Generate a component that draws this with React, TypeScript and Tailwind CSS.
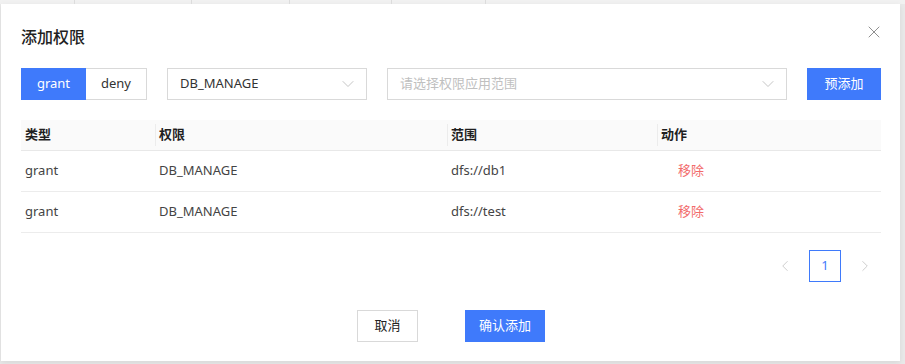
import { X, ChevronDown, ChevronLeft, ChevronRight } from 'lucide-react';

const rows = [
  { type: 'grant', perm: 'DB_MANAGE', scope: 'dfs://db1' },
  { type: 'grant', perm: 'DB_MANAGE', scope: 'dfs://test' },
];

const font = "font-['Noto_Sans','Noto_Sans_CJK_SC',sans-serif]";

export default function App() {
  return (
    <div className={`w-[905px] h-[364px] bg-[#e9e9e9] overflow-hidden ${font}`}>
      {/* page tabs peeking out behind the modal */}
      <div className="flex h-[4px] bg-[#f1f1f1]">
        <div className="w-[75px] border-r border-[#dcdcdc]" />
        <div className="w-[115px] ml-[2px] border-r border-[#dcdcdc]" />
        <div className="w-[96px] ml-[2px] border-r border-[#dcdcdc]" />
        <div className="w-[100px] ml-[2px] border-r border-[#dcdcdc]" />
        <div className="w-[92px] ml-[2px] border-r border-[#dcdcdc]" />
      </div>

      {/* Modal */}
      <div className="ml-[1px] w-[899px] h-[357px] bg-white shadow-[0_2px_6px_rgba(0,0,0,0.08)] pl-[20px] pr-[19px] pt-[23px]">
        {/* Header */}
        <div className="flex items-start justify-between h-[20px]">
          <h2 className="text-[16px] leading-[20px] font-medium text-[#222]">添加权限</h2>
          <X className="w-[20px] h-[20px] text-[#8f8f8f] mt-[-5px] mr-[-3px]" strokeWidth={1.2} />
        </div>

        {/* Controls */}
        <div className="flex items-center mt-[21px] h-[32px]">
          <div className="flex h-[32px] text-[13px]">
            <button className="w-[65px] bg-[#3f7afb] text-white">grant</button>
            <button className="w-[61px] border border-[#d9d9d9] border-l-0 text-[#333]">deny</button>
          </div>
          <div className="ml-[20px] w-[200px] h-[32px] border border-[#d9d9d9] flex items-center justify-between pl-[12px] pr-[8px]">
            <span className="text-[13px] text-[#333]">DB_MANAGE</span>
            <ChevronDown className="w-[20px] h-[20px] text-[#c0c0c0]" strokeWidth={1.1} />
          </div>
          <div className="ml-[20px] w-[400px] h-[32px] border border-[#d9d9d9] flex items-center justify-between pl-[12px] pr-[8px]">
            <span className="text-[13px] text-[#c0c0c0]">请选择权限应用范围</span>
            <ChevronDown className="w-[20px] h-[20px] text-[#c0c0c0]" strokeWidth={1.1} />
          </div>
          <button className="ml-[20px] w-[74px] h-[32px] bg-[#3f7afb] text-white text-[13px]">预添加</button>
        </div>

        {/* Table */}
        <div className="mt-[20px] w-[860px] text-[13px]">
          <div className="grid grid-cols-[134px_292px_210px_224px] h-[31px] bg-[#fafafa] border-b border-[#e8e8e8] items-center font-semibold text-[#1f1f1f]">
            <div className="pl-[4px]">类型</div>
            <div className="pl-[3px] border-l border-[#ececec] h-[22px] flex items-center">权限</div>
            <div className="pl-[3px] border-l border-[#ececec] h-[22px] flex items-center">范围</div>
            <div className="pl-[3px] border-l border-[#ececec] h-[22px] flex items-center">动作</div>
          </div>
          {rows.map((r) => (
            <div
              key={r.scope}
              className="grid grid-cols-[134px_292px_210px_224px] h-[41px] border-b border-[#ececec] items-center text-[#444]"
            >
              <div className="pl-[4px]">{r.type}</div>
              <div className="pl-[4px]">{r.perm}</div>
              <div className="pl-[4px]">{r.scope}</div>
              <div className="pl-[21px] text-[#f26b6b]">移除</div>
            </div>
          ))}
        </div>

        {/* Pagination */}
        <div className="w-[860px] flex justify-end items-center gap-[8px] mt-[17px]">
          <button className="w-[32px] h-[32px] flex items-center justify-center text-[#c8c8c8]">
            <ChevronLeft className="w-[18px] h-[18px]" strokeWidth={1.2} />
          </button>
          <button className="w-[32px] h-[32px] border border-[#3f7afb] text-[#3f7afb] text-[13px]">1</button>
          <button className="w-[32px] h-[32px] flex items-center justify-center text-[#c8c8c8]">
            <ChevronRight className="w-[18px] h-[18px]" strokeWidth={1.2} />
          </button>
        </div>

        {/* Footer */}
        <div className="w-[860px] flex justify-center gap-[47px] mt-[28px]">
          <button className="w-[61px] h-[32px] border border-[#d9d9d9] text-[13px] text-[#222]">取消</button>
          <button className="w-[80px] h-[32px] bg-[#3f7afb] text-white text-[13px]">确认添加</button>
        </div>
      </div>
    </div>
  );
}
